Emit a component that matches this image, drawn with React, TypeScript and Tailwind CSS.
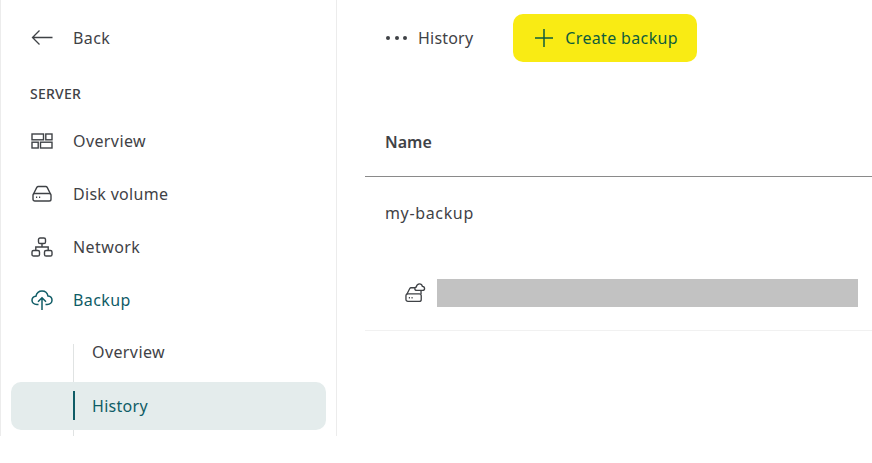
import React from "react";

function NavRow({ icon, label, active, tight }: { icon: React.ReactNode; label: string; active?: boolean; tight?: boolean }) {
  return (
    <div className={`flex h-[53px] shrink-0 items-center gap-[20px] pl-[29px] ${active ? "text-[#0f5c66]" : "text-[#3f4246]"}`}>
      <span className="flex h-6 w-[23px] items-center justify-center">{icon}</span>
      <span className={`text-[16px] ${tight ? "tracking-[0.3px]" : "tracking-[0.4px]"}`}>{label}</span>
    </div>
  );
}

const BackIcon = (
  <svg width="22" height="17" viewBox="0 0 22 17" fill="none" stroke="currentColor" strokeWidth="1.3">
    <path d="M21.500 8.500H1.500M8.500 1.500l-7 7 7 7" />
  </svg>
);
const GridIcon = (
  <svg width="22" height="16" viewBox="0 0 22 16" fill="none" stroke="currentColor" strokeWidth="1.400">
    <rect x="1" y="1" width="11.500" height="5.800" />
    <rect x="14.800" y="1" width="6.200" height="5.800" />
    <rect x="1" y="9.200" width="6.200" height="5.800" />
    <rect x="9.500" y="9.200" width="11.500" height="5.800" />
  </svg>
);
const DiskIcon = (
  <svg width="20" height="17" viewBox="0 0 20 17" fill="none" stroke="currentColor" strokeWidth="1.400">
    <path d="M1.500 9 4.800 2.400c.3-.6.800-.9 1.500-.9h7.400c.7 0 1.200.3 1.500.9L18.500 9" />
    <rect x="1" y="8.500" width="18" height="7.500" rx="1.800" />
    <path d="M4 12.300h1.200M7 12.300h1.200" />
  </svg>
);
const NetworkIcon = (
  <svg width="22" height="20" viewBox="0 0 22 20" fill="none" stroke="currentColor" strokeWidth="1.400">
    <rect x="7.500" y="1" width="7" height="5.500" rx="1.600" />
    <path d="M11 6.500v3.500M4.800 13.500V10h12.400v3.500" />
    <rect x="1" y="13.500" width="7.500" height="5.500" rx="1.600" />
    <rect x="13.500" y="13.500" width="7.500" height="5.500" rx="1.600" />
  </svg>
);
const CloudIcon = (
  <svg width="22" height="20" viewBox="0 0 22 20" fill="none" stroke="currentColor" strokeWidth="1.500">
    <path d="M7.500 14.500H5.800C3 14.500 1 12.700 1 10.300c0-2.200 1.700-3.900 3.900-4.100C5.700 3 8 1 11 1c3 0 5.400 2.100 6 5.100 2.300.2 4 1.900 4 4.200 0 2.400-2 4.200-4.800 4.200H14.500" />
    <path d="M11 20V7.800M7 11.800l4-4 4 4" />
  </svg>
);
const CloudDiskIcon = (
  <svg width="22" height="22" viewBox="0 0 22 22" fill="none" stroke="#3f4246" strokeWidth="1.400">
    <path d="M1.800 12.500 5 6.300c.3-.5.700-.8 1.300-.8h4.200" />
    <path d="M16.800 8v4" />
    <rect x="1" y="12" width="16" height="7.800" rx="2" />
    <path d="M4 16h1.200M6.800 16h1.200" />
    <path d="M12.300 8.300c-1.200 0-2-.8-2-1.800 0-.9.600-1.600 1.500-1.800C12.200 2.800 13.500 1.500 15.200 1.500c1.500 0 2.700 1 3 2.500 1.300.1 2.300 1.100 2.300 2.200 0 1.200-1 2.100-2.200 2.100z" fill="#fff" />
  </svg>
);

export default function App() {
  return (
    <div className="h-[463px] w-[872px] overflow-hidden bg-white">
      <div className="flex h-[436px] w-full font-['Noto_Sans',sans-serif]">
        <aside className="flex h-full w-[337px] shrink-0 flex-col overflow-hidden border-x border-[#ececec] pt-[11px]">
          <NavRow icon={BackIcon} label="Back" />
          <div className="mt-[17px] h-[26px] pl-[29px] text-[14px] font-medium leading-[26px] tracking-[0.25px] text-[#3f4246]">SERVER</div>
          <div className="mt-[7px] flex flex-col">
            <NavRow icon={GridIcon} label="Overview" />
            <NavRow icon={DiskIcon} label="Disk volume" tight />
            <NavRow icon={NetworkIcon} label="Network" />
            <NavRow icon={CloudIcon} label="Backup" active />
          </div>
          <div className="mx-[10px] mt-[18px] flex flex-col">
            <div className="ml-[62px] h-[38px] shrink-0 border-l border-[#e0e3e3] pl-[18px] text-[16px] leading-[16px] tracking-[0.4px] text-[#3f4246]">
              Overview
            </div>
            <div className="flex h-[48px] shrink-0 items-center rounded-[10px] bg-[#e4ecec] pb-[1px] pl-[62px]">
              <div className="flex h-[29px] items-center border-l-2 border-[#0f5c66] pl-[17px] text-[16px] tracking-[0.3px] text-[#0f5c66]">History</div>
            </div>
            <div className="ml-[62px] h-[10px] border-l border-[#e0e3e3]" />
          </div>
        </aside>
        <main className="min-w-0 flex-1 pl-[28px]">
          <div className="flex h-[76px] items-center pl-[20px]">
            <span className="mr-[11px] ml-[1px] flex items-center gap-[4.500px]">
              <i className="h-1 w-1 rounded-full bg-[#3f4246]" />
              <i className="h-1 w-1 rounded-full bg-[#3f4246]" />
              <i className="h-1 w-1 rounded-full bg-[#3f4246]" />
            </span>
            <span className="text-[16px] tracking-[0.2px] text-[#3f4246]">History</span>
            <button className="ml-[40px] flex h-[48px] w-[184px] items-center gap-[11px] rounded-[10px] bg-[#f9eb14] pl-[21px] text-[16px] tracking-[0.35px] text-[#0f5d3c]">
              <svg width="20" height="20" viewBox="0 0 20 20" fill="none" stroke="currentColor" strokeWidth="1.500">
                <path d="M10 1v18M1 10h18" />
              </svg>
              Create backup
            </button>
          </div>
          <div className="flex h-[101px] items-end border-b border-[#8a8a8a] pb-[22px] pl-[20px]">
            <span className="text-[16px] font-semibold leading-[24px] text-[#3f4246]">Name</span>
          </div>
          <div className="h-[154px] border-b border-[#f1f1f1] pl-[20px] pt-[24px]">
            <div className="text-[16px] leading-[24px] tracking-[0.65px] text-[#3f4246]">my-backup</div>
            <div className="mt-[54px] flex h-[28px] items-center pl-[20px]">
              <span className="mr-[11px] flex w-[21px] items-center justify-center">{CloudDiskIcon}</span>
              <div className="h-[28px] w-[421px] bg-[#c2c2c2]" />
            </div>
          </div>
        </main>
      </div>
    </div>
  );
}
